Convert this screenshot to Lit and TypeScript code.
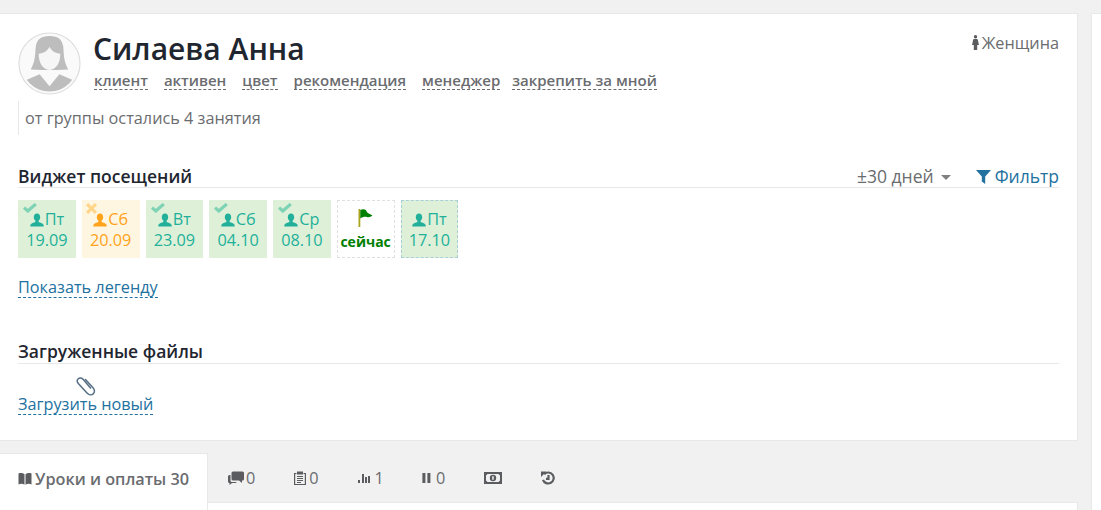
import { LitElement, html, css } from "lit";
import { customElement } from "lit/decorators.js";

const person = html`<svg class="pi" viewBox="0 0 14 14"><path fill="currentColor" d="M7 .5c2 0 3.200 1.500 3.200 3.600 0 1.600-.7 3-1.600 3.700v1.300c1.600.7 4.200 1.300 4.900 2.600.2.400.2 1.300.2 1.800H.3c0-.5 0-1.400.2-1.800.7-1.300 3.300-1.900 4.900-2.600V7.800C4.500 7.100 3.800 5.700 3.800 4.100 3.800 2 5 .5 7 .5z"/></svg>`;
const check = html`<svg class="mark" viewBox="0 0 14 10"><path fill="none" stroke="#7fd3b5" stroke-width="3.200" d="M1 4.600 4.800 8 12.800 1"/></svg>`;
const cross = html`<svg class="mark cross" viewBox="0 0 12 12"><path fill="#ffd58a" d="M2.400 0 6 3.600 9.600 0 12 2.400 8.400 6 12 9.600 9.600 12 6 8.400 2.400 12 0 9.600 3.600 6 0 2.400z"/></svg>`;

const days = [
  { d: "Пт", n: "19.09", m: check, c: "" },
  { d: "Сб", n: "20.09", m: cross, c: "warn" },
  { d: "Вт", n: "23.09", m: check, c: "" },
  { d: "Сб", n: "04.10", m: check, c: "" },
  { d: "Ср", n: "08.10", m: check, c: "" },
];
const links = ["клиент", "активен", "цвет", "рекомендация", "менеджер", "закрепить за мной"];

@customElement("app-root")
export class AppRoot extends LitElement {
  static styles = css`
    :host { display: flex; width: 1101px; height: 510px; overflow: hidden; background: #f1f1f1;
      font-family: "Open Sans", sans-serif; font-size: 16.25px; color: #6a6c6f; }
    .main { width: 1091px; flex: none; padding-top: 13px; box-sizing: border-box; }
    .side { flex: 1; margin-top: 13px; background: #fff; border: 1px solid #e6e8ea; border-width: 1px 0 0 1px; }
    .panel { width: 1078px; height: 428px; box-sizing: border-box; background: #fff; border: 1px solid #e6e8ea; border-width: 1px 1px 1px 0; padding: 18px 18px 0; }
    .head { display: flex; height: 69px; }
    .avatar { width: 63px; height: 63px; flex: none; margin-right: 13px; }
    .info { flex: 1; }
    h1 { margin: 0 0 0 -1px; font-size: 30px; font-weight: 600; line-height: 34px; color: #1f2630; }
    .links { display: flex; gap: 16px; margin-top: 5px; }
    .links span { font-size: 15px; font-weight: 600; line-height: 18px; color: #6a6c6f; border-bottom: 1px dashed #6a6c6f; }
    .links span:last-child { margin-left: -4px; }
    .gender { display: flex; align-items: center; gap: 3px; height: 21px; color: #6a6c6f; }
    .note { border-left: 1px solid #e6e8ea; height: 34px; padding-left: 6px; line-height: 34px; color: #6a6c6f; }
    .sec { display: flex; align-items: flex-end; justify-content: space-between; border-bottom: 1px solid #e6e8ea; height: 26px; }
    .sec h2 { margin: 0; font-size: 17.5px; font-weight: 600; line-height: 22px; color: #1f2630; }
    .visit-sec { margin-top: 26px; }
    .tools { display: flex; gap: 25px; font-size: 17.5px; line-height: 22px; }
    .range { display: flex; align-items: center; gap: 7px; color: #6a6c6f; }
    .caret { width: 0; height: 0; border: 5px solid transparent; border-top-color: #808080; border-bottom: 0; margin-top: 2px; }
    .filter { display: flex; align-items: center; gap: 4px; color: #23719f; }
    .filter svg { width: 15px; height: 15px; }
    .visits { display: flex; gap: 6px; margin-top: 12px; }
    .v { position: relative; width: 57.75px; height: 58px; box-sizing: border-box; background: #dff0d8; color: #22b09a; text-align: center; line-height: 21px; padding-top: 9px; }
    .v.warn { background: #fff6e1; color: #ffa31a; }
    .v.now { background: #fff; border: 1px dashed #e0e0e0; color: #008000; font-size: 14px; font-weight: 700; padding-top: 6px; }
    .v.plan { border: 1px dashed #a8cfd9; padding-top: 8px; }
    .day { display: flex; justify-content: center; align-items: center; gap: 1px; }
    .pi { width: 14px; height: 14px; }
    .mark { position: absolute; left: 5px; top: 3px; width: 14px; height: 10px; }
    .mark.cross { left: 4px; width: 11px; height: 11px; }
    .flag { display: block; width: 18px; height: 20px; margin: 0 auto 4px; }
    .legend { display: inline-block; margin-top: 19px; line-height: 20px; color: #23719f; border-bottom: 1px dashed #23719f; }
    .files { margin-top: 40px; }
    .files .sec { height: 25px; }
    .files .sec h2 { padding-bottom: 1px; }
    .clip { display: block; width: 20px; height: 20px; margin: 12px 0 -3px 58px; }
    .upload { display: inline-block; line-height: 20px; color: #23719f; border-bottom: 1px dashed #23719f; }
    .tabs { display: flex; margin-top: 12px; width: 1091px; height: 57px; }
    .tab { display: flex; align-items: center; height: 49px; gap: 2px; color: #6a6c6f; padding: 0 19px; box-sizing: border-box; }
    .tab svg { width: 14px; height: 14px; flex: none; }
    .tab svg.w16 { width: 16px; }
    .tab svg.w18 { width: 18px; }
    .tab.wide { gap: 4px; padding-right: 17px; }
    .tab.m1 { margin-left: 1px; }
    .tab.on { width: 208px; height: 57px; padding: 0 0 7px 18px; gap: 3px; background: #fff; border: 1px solid #e6e8ea; border-width: 1px 1px 0 0; font-weight: 600; }
    .rightcol { flex: 1; display: flex; flex-direction: column; }
    .rest { display: flex; height: 49px; padding-left: 1px; }
    .below { width: 870px; flex: 1; background: #fff; border: 1px solid #e6e8ea; border-width: 1px 1px 0 0; box-sizing: border-box; }
  `;

  render() {
    return html`<div class="main">
      <div class="panel">
        <div class="head">
          <svg class="avatar" viewBox="0 0 64 64">
            <defs><clipPath id="cc"><circle cx="32" cy="32" r="28.500"/></clipPath></defs>
            <circle cx="32" cy="32" r="31" fill="#fafafa" stroke="#dedede" stroke-width="1.200"/>
            <g clip-path="url(#cc)">
              <path fill="#bdbdbd" d="M32 4c9 0 13 4 14 11 .6 6 0 14 5 23l-11 .5H24L13 38c5-9 4.400-17 5-23C19 8 23 4 32 4z"/>
              <path fill="#f6f6f6" d="M21 22c5 0 9-3 11-7 2 4 6 7 11 7 0 9-4 16-11 16.500C25 38 21 31 21 22z"/>
              <path fill="#bdbdbd" d="M3 62c0-10 1-11.500 6-13.500l13-5.500 10 12 10-12 13 5.500c5 2 6 3.500 6 13.500z"/>
            </g>
          </svg>
          <div class="info">
            <h1>Силаева Анна</h1>
            <div class="links">${links.map((l) => html`<span>${l}</span>`)}</div>
          </div>
          <div class="gender">
            <svg width="7" height="15" viewBox="0 0 7 15"><path fill="#5a5c5f" d="M3.500 0a1.700 1.700 0 0 1 0 3.400A1.700 1.700 0 0 1 3.500 0zM2 4h3c.7 0 1 1 1.200 2.500L7 10H5.200v5H1.800v-5H0l.8-3.500C1 5 1.300 4 2 4z"/></svg>
            Женщина
          </div>
        </div>
        <div class="note">от группы остались 4 занятия</div>
        <div class="sec visit-sec">
          <h2>Виджет посещений</h2>
          <div class="tools">
            <div class="range">±30 дней <span class="caret"></span></div>
            <div class="filter"><svg viewBox="0 0 15 15"><path fill="#23719f" d="M0 1h15L9.200 7.500V15L5.800 12.500v-5z"/></svg>Фильтр</div>
          </div>
        </div>
        <div class="visits">
          ${days.map((x) => html`<div class="v ${x.c}">${x.m}<div class="day">${person}${x.d}</div><div>${x.n}</div></div>`)}
          <div class="v now">
            <svg class="flag" viewBox="0 0 18 20"><rect x="1.500" y="2" width="1.800" height="18" fill="#a9a51c"/><path fill="#008000" d="M3.300 3c2-1.200 4.500-1 5.700.3l1 2c1 1.200 3 2 5.500 3.200-2 1.700-4 2-5.500 1.500-2-.7-4.500-.3-6.700 1.500z"/></svg>
            <div>сейчас</div>
          </div>
          <div class="v plan"><div class="day">${person}Пт</div><div>17.10</div></div>
        </div>
        <div class="legend">Показать легенду</div>
        <div class="files">
          <div class="sec"><h2>Загруженные файлы</h2></div>
          <svg class="clip" viewBox="0 0 20 20"><path fill="none" stroke="#566f85" stroke-width="1.500" stroke-linecap="round" d="M14.500 12 7.300 3.500C5.900 1.800 3.600 1.500 2.300 2.700.9 4 1 6 2.500 7.700L11 17c1.700 1.900 4.400 2.300 6.200.8 1.800-1.500 1.600-4 0-5.800L9.500 3.500"/></svg>
          <div class="upload">Загрузить новый</div>
        </div>
      </div>
      <div class="tabs">
        <div class="tab on">
          <svg viewBox="0 0 14 14"><path fill="#5a5c5f" d="M.5 1.500C2.500.8 5 1 6.500 2.300v10.500C5 11.700 2.500 11.500.5 12.500zM13.500 1.500C11.500.8 9 1 7.500 2.300v10.500c1.500-1.100 4-1.300 6-.3z"/></svg>
          Уроки и оплаты 30
        </div>
        <div class="rightcol">
          <div class="rest">
            <div class="tab"><svg class="w16" viewBox="0 0 16 14"><path fill="#5a5c5f" d="M5 .5h9.500a1.500 1.500 0 0 1 1.500 1.500v6a1.500 1.500 0 0 1-1.500 1.500H14v2.500l-3-2.500H5A1.500 1.500 0 0 1 3.500 8V2A1.500 1.500 0 0 1 5 .5z"/><path fill="#5a5c5f" d="M1.500 4H2.500v5.500A1.500 1.500 0 0 0 4 11h5l-1.500 1H4l-2.500 2v-2A1.500 1.500 0 0 1 0 10.500V5.500A1.500 1.500 0 0 1 1.500 4z"/></svg>0</div>
            <div class="tab"><svg viewBox="0 0 14 14"><path fill="none" stroke="#5a5c5f" stroke-width="1.200" d="M3.500 2.500H1.600v11h10.800v-11h-1.900M4 5.500h6M4 7.500h6M4 9.500h6M4 11.500h4"/><rect x="4" y=".5" width="6" height="3" fill="#5a5c5f"/></svg>0</div>
            <div class="tab wide"><svg viewBox="0 0 14 14"><path fill="#5a5c5f" d="M1 9h2v3H1zM5 3h2v9H5zM8 6h2v6H8zM11 5h2v7h-2z"/></svg>1</div>
            <div class="tab"><svg viewBox="0 0 14 14"><path fill="#5a5c5f" d="M2.400 2h3v10h-3zM7.400 2h3v10h-3z"/></svg>0</div>
            <div class="tab m1"><svg class="w18" viewBox="0 0 18 14"><path fill="#5a5c5f" fill-rule="evenodd" d="M0 1h18v12H0zM3.500 3 2 4.500v5L3.500 11h11l1.500-1.500v-5L14.500 3zM9 3.800a3.200 3.200 0 0 1 0 6.400 3.200 3.200 0 0 1 0-6.400z"/><path fill="#f1f1f1" d="M8.200 5.300h1.500v3.500H8.200z"/></svg></div>
            <div class="tab m1"><svg viewBox="0 0 14 14"><path fill="none" stroke="#5a5c5f" stroke-width="2.200" d="M3.200 3.200A5.500 5.500 0 1 1 2 8.800M7.500 4v3.800H5"/><path fill="#5a5c5f" d="M0 .5h5.500L0 6z"/></svg></div>
          </div>
          <div class="below"></div>
        </div>
      </div>
    </div>
    <div class="side"></div>`;
  }
}
